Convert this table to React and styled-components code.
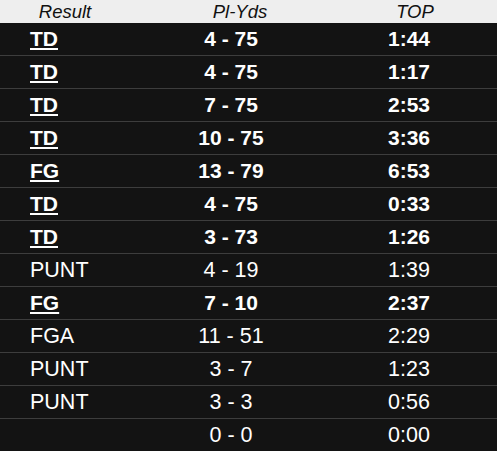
import styled, { createGlobalStyle } from "styled-components";

const Global = createGlobalStyle`
  html, body {
    margin: 0;
    padding: 0;
    background: #131313;
  }
`;

const Table = styled.div`
  width: 497px;
  height: 451px;
  overflow: hidden;
  background: #131313;
  font-family: "Liberation Sans", Arial, sans-serif;
`;

const Header = styled.div`
  display: grid;
  grid-template-columns: 130px 220px 1fr;
  height: 23px;
  align-items: center;
  background: #eeeeee;
  color: #111;
  font-style: italic;
  font-size: 18.5px;
`;

const HeadCell = styled.div`
  text-align: center;
  padding-right: ${({ $pr }) => $pr || 0}px;
`;

const Row = styled.div`
  display: grid;
  grid-template-columns: 171px 120px 1fr;
  height: 32px;
  align-items: center;
  border-bottom: 1px solid #3d3d3d;
  color: #fff;
  font-size: ${({ $bold }) => ($bold ? 21 : 21.5)}px;
  font-weight: ${({ $bold }) => ($bold ? 700 : 400)};
`;

const Result = styled.div`
  padding-left: 30px;
  text-decoration: ${({ $bold }) => ($bold ? "underline" : "none")};
  text-underline-offset: 2px;
  text-decoration-thickness: 2px;
`;

const Cell = styled.div`
  text-align: center;
  padding-left: ${({ $pl }) => $pl || 0}px;
`;

const drives = [
  ["TD", "4 - 75", "1:44", true],
  ["TD", "4 - 75", "1:17", true],
  ["TD", "7 - 75", "2:53", true],
  ["TD", "10 - 75", "3:36", true],
  ["FG", "13 - 79", "6:53", true],
  ["TD", "4 - 75", "0:33", true],
  ["TD", "3 - 73", "1:26", true],
  ["PUNT", "4 - 19", "1:39", false],
  ["FG", "7 - 10", "2:37", true],
  ["FGA", "11 - 51", "2:29", false],
  ["PUNT", "3 - 7", "1:23", false],
  ["PUNT", "3 - 3", "0:56", false],
  ["", "0 - 0", "0:00", false],
];

export default function App() {
  return (
    <Table>
      <Global />
      <Header>
        <HeadCell>Result</HeadCell>
        <HeadCell>Pl-Yds</HeadCell>
        <HeadCell $pr={17}>TOP</HeadCell>
      </Header>
      {drives.map(([res, yds, top, bold], i) => (
        <Row key={i} $bold={bold}>
          <Result $bold={bold}>{res}</Result>
          <Cell>{yds}</Cell>
          <Cell $pl={30}>{top}</Cell>
        </Row>
      ))}
    </Table>
  );
}
